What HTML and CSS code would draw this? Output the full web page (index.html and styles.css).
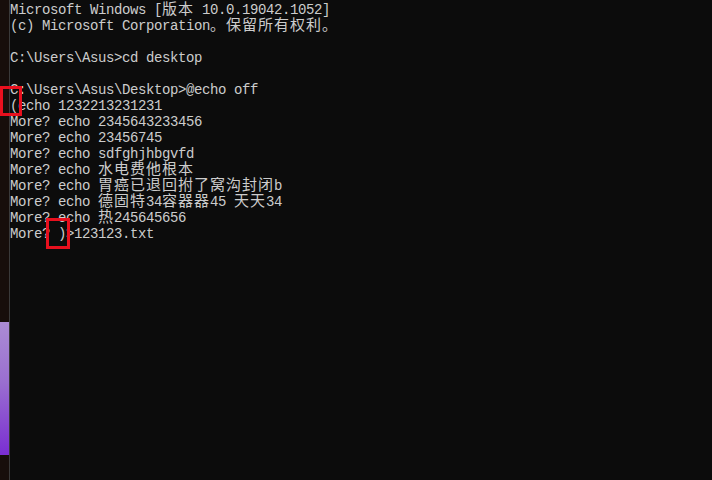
FILE: index.html
```html
<!DOCTYPE html>
<html lang="zh-CN">
  <head>
    <meta charset="UTF-8" />
    <meta name="viewport" content="width=device-width, initial-scale=1.0" />
    <title>Command Prompt</title>
    <link rel="stylesheet" href="styles.css">
  </head>
  <body>
    <div class="desktop">
      <div class="side-strip">
        <div class="side-tile"></div>
      </div>
      <div class="console">
<pre class="output">Microsoft Windows [<span class="cjk">版本</span> 10.0.19042.1052]
(c) Microsoft Corporation<span class="cjk">。保留所有权利。</span>

C:\Users\Asus&gt;cd desktop

C:\Users\Asus\Desktop&gt;@echo off
(echo 1232213231231
More? echo 2345643233456
More? echo 23456745
More? echo sdfghjhbgvfd
More? echo <span class="cjk">水电费他根本</span>
More? echo <span class="cjk">胃癌已退回拊了窝沟封闭</span>b
More? echo <span class="cjk">德固特</span>34<span class="cjk">容器器</span>45 <span class="cjk">天天</span>34
More? echo <span class="cjk">热</span>245645656
More? )&gt;123123.txt</pre>
        <div class="mark mark-open"></div>
        <div class="mark mark-close"></div>
      </div>
    </div>
  </body>
</html>
```

FILE: styles.css
```css
html,
body {
  margin: 0;
  height: 100%;
  background-color: #0c0c0c;
}

.desktop {
  display: flex;
  height: 480px;
  overflow: hidden;
}

.side-strip {
  width: 10px;
  flex-shrink: 0;
  padding-top: 322px;
  box-sizing: border-box;
  background-color: #170e0b;
  border-right: 1px solid #3a3a3a;
}

.side-tile {
  height: 133px;
  background: linear-gradient(to bottom, #ab8cd4 0%, #9a6fd0 45%, #7a2ed2 100%);
}

.console {
  position: relative;
  flex: 1;
  background-color: #0c0c0c;
}

.output {
  margin: 0;
  padding: 2px 0 0;
  font-family: "Liberation Mono", "DejaVu Sans Mono", monospace;
  font-size: 14px;
  letter-spacing: -0.4px;
  line-height: 16px;
  color: #cccccc;
  white-space: pre;
}

.cjk {
  font-family: "Noto Sans CJK SC", sans-serif;
  font-size: 15px;
  letter-spacing: 1px;
  line-height: 0;
}

/* red annotation boxes drawn over the screenshot */
.mark {
  position: absolute;
  border: 3px solid #e8101e;
  box-sizing: border-box;
}

.mark-open {
  left: -10px;
  top: 86px;
  width: 22px;
  height: 30px;
}

.mark-close {
  left: 36px;
  top: 218px;
  width: 24px;
  height: 31px;
}
```
